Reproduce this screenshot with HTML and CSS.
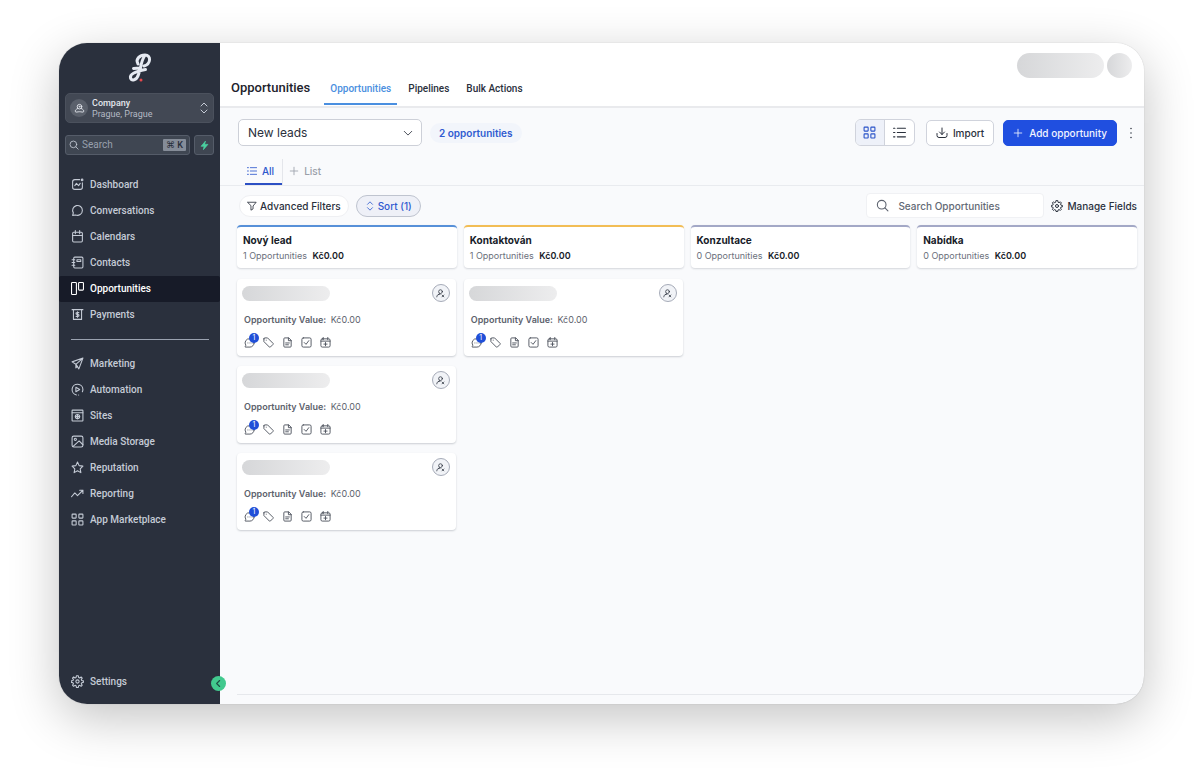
FILE: index.html
```html
<!DOCTYPE html>
<html lang="en">
<head>
<meta charset="utf-8">
<title>Opportunities</title>
<link rel="stylesheet" href="styles.css">
</head>
<body>
<svg class="sprite" aria-hidden="true">
  <symbol id="dashboard" viewBox="0 0 24 24"><path d="M16 3H7a4 4 0 0 0-4 4v10a4 4 0 0 0 4 4h10a4 4 0 0 0 4-4V9M7 14l3-4 4 4 3-4"/><circle cx="20.500" cy="3.500" r="1.500"/></symbol>
  <symbol id="chat" viewBox="0 0 24 24"><path d="M21 12a9 9 0 0 1-12.600 8.200L3 21l1.300-4.600A9 9 0 1 1 21 12z"/></symbol>
  <symbol id="calendar" viewBox="0 0 24 24"><rect x="3" y="4" width="18" height="18" rx="2"/><path d="M3 10h18M8 1v6M16 1v6"/></symbol>
  <symbol id="contacts" viewBox="0 0 24 24"><rect x="5" y="2" width="17" height="20" rx="2"/><path d="M2 7h5M2 12h5M2 17h5M11 7h7v3h-7z"/></symbol>
  <symbol id="board" viewBox="0 0 24 24"><rect x="1" y="1" width="9" height="22" rx="1.500"/><rect x="14" y="1" width="9" height="14" rx="1.500"/></symbol>
  <symbol id="payments" viewBox="0 0 24 24"><path d="M2 3h20M4.500 3v18h15V3M14.500 8.500h-3.500a1.700 1.700 0 0 0 0 3.500h2a1.700 1.700 0 0 1 0 3.500H9.500M12 7v10"/></symbol>
  <symbol id="send" viewBox="0 0 24 24"><path d="M22 2 2 9l7 4.500L14.500 22zM22 2 9 13.500M9 13.500V20l3-3"/></symbol>
  <symbol id="automation" viewBox="0 0 24 24"><path d="M10 22A10 10 0 1 1 22 12q0 2-1 4M9 8l7 4-7 4zM14 22h.1"/></symbol>
  <symbol id="sites" viewBox="0 0 24 24"><rect x="2" y="2" width="20" height="20" rx="1"/><path d="M2 7h20"/><circle cx="12" cy="14" r="4"/><path d="M8 14h8M12 10v8"/></symbol>
  <symbol id="image" viewBox="0 0 24 24"><rect x="2" y="2" width="20" height="20" rx="3"/><circle cx="8" cy="8" r="2"/><path d="m4 21 11-10 7 7"/></symbol>
  <symbol id="star" viewBox="0 0 24 24"><path d="m12 2 3 6.500 7 1-5 5 1.200 7L12 18l-6.200 3.500 1.200-7-5-5 7-1z"/></symbol>
  <symbol id="trend" viewBox="0 0 24 24"><path d="m1 18 6-7 5 5L22 6M16 6h6v6"/></symbol>
  <symbol id="grid" viewBox="0 0 24 24"><rect x="2" y="2" width="7.500" height="7.500" rx="1"/><rect x="14.500" y="2" width="7.500" height="7.500" rx="1"/><rect x="2" y="14.500" width="7.500" height="7.500" rx="1"/><rect x="14.500" y="14.500" width="7.500" height="7.500" rx="1"/></symbol>
  <symbol id="gear" viewBox="0 0 24 24"><circle cx="12" cy="12" r="3"/><path d="m10 1.500-.6 3-2 .9-2.600-1.700-2 2L4.500 8.300l-.9 2-3 .6v2.700l3 .6.9 2-1.700 2.600 2 2 2.600-1.700 2 .9.600 3h3.500l.6-3 2-.9 2.600 1.700 2-2-1.700-2.600.9-2 3-.6v-2.700l-3-.6-.9-2 1.700-2.600-2-2-2.600 1.700-2-.9-.6-3z"/></symbol>
  <symbol id="search" viewBox="0 0 24 24"><circle cx="10.500" cy="10.500" r="8"/><path d="m16.500 16.500 5.500 5.500"/></symbol>
  <symbol id="user" viewBox="0 0 24 24"><circle cx="12" cy="8" r="5"/><circle cx="12" cy="8" r="1"/><path d="M8 12c-4 2-6 4-5 7 1 2 5 0 9 0s8 2 9 0c1-3-1-5-5-7"/></symbol>
  <symbol id="updown" viewBox="0 0 24 24"><path d="m6 8 6-6 6 6M6 16l6 6 6-6"/></symbol>
  <symbol id="bolt" viewBox="0 0 24 24"><path d="M14 1 3 14h8l-2 9 12-14h-8z"/></symbol>
  <symbol id="left" viewBox="0 0 24 24"><path d="m15 4-8 8 8 8"/></symbol>
  <symbol id="down" viewBox="0 0 24 24"><path d="m3 8 9 9 9-9"/></symbol>
  <symbol id="list" viewBox="0 0 24 24"><path d="M8 4h15M8 12h15M8 20h15M1 4h2.500M1 12h2.500M1 20h2.500"/></symbol>
  <symbol id="plus" viewBox="0 0 24 24"><path d="M12 3v18M3 12h18"/></symbol>
  <symbol id="import" viewBox="0 0 24 24"><path d="M12 2v13M7 10l5 5 5-5M2 13v4a4 4 0 0 0 4 4h12a4 4 0 0 0 4-4v-4"/></symbol>
  <symbol id="dots" viewBox="0 0 24 24"><circle cx="12" cy="3" r="1.500"/><circle cx="12" cy="12" r="1.500"/><circle cx="12" cy="21" r="1.500"/></symbol>
  <symbol id="filter" viewBox="0 0 24 24"><path d="M2 3h20l-7.500 9v7l-5 3V12z"/></symbol>
  <symbol id="unassigned" viewBox="0 0 24 24"><circle cx="12" cy="7" r="5"/><path d="M2 21c0-5 4-7 9-7M9 12l-3 3M16 16l5 5M21 16l-5 5"/></symbol>
  <symbol id="message" viewBox="0 0 24 24"><path d="M22 13a9 9 0 0 1-9 9H3q-1 0-.5-1L4 18a9 9 0 0 1 9-14 9 9 0 0 1 9 9zM8.500 13h.1M13 13h.1M17.500 13h.1"/></symbol>
  <symbol id="tag" viewBox="0 0 24 24"><path d="M2 4v6l12 12q1 1 2 0l6-6q1-1 0-2L10 2H4a2 2 0 0 0-2 2zM7 7h.1"/></symbol>
  <symbol id="note" viewBox="0 0 24 24"><path d="M14 2H6a2 2 0 0 0-2 2v16a2 2 0 0 0 2 2h12a2 2 0 0 0 2-2V8zM14 2v6h6M8 13h8M8 17h6"/></symbol>
  <symbol id="check" viewBox="0 0 24 24"><rect x="2" y="2" width="20" height="20" rx="3"/><path d="m7 12 4 4 6-8"/></symbol>
  <symbol id="calplus" viewBox="0 0 24 24"><rect x="2" y="4" width="20" height="18" rx="3"/><path d="M7 1v5M17 1v5M2 9h20M12 12v7M8.500 15.500h7"/></symbol>
</svg>

<div class="app">
  <aside class="sidebar">
    <svg class="logo" viewBox="0 0 24 30" role="img" aria-label="Company logo">
      <path class="logo-stroke" d="M10 11C7 6 12 2 17 2c6.500 0 6 9-1 11M16.500 3C13 8 13 15 10.500 21.500 8.500 28 3.500 28 2.500 25c-1-4 5-6.500 15-8.500M5.500 15.500l7-.5"/>
      <circle class="logo-dot" cx="13" cy="27" r="1.500"/>
    </svg>
    <button class="company" type="button">
      <span class="company-pic"><svg class="i"><use href="#user"/></svg></span>
      <span class="company-text"><span class="company-name">Company</span><span>Prague, Prague</span></span>
      <svg class="i"><use href="#updown"/></svg>
    </button>
    <div class="side-search">
      <label class="side-field"><svg class="i"><use href="#search"/></svg><input type="text" placeholder="Search" aria-label="Search"><kbd>⌘ K</kbd></label>
      <button class="quick" type="button" aria-label="Quick actions"><svg class="i"><use href="#bolt"/></svg></button>
    </div>
    <nav class="nav">
      <a href="#"><svg class="i"><use href="#dashboard"/></svg>Dashboard</a>
      <a href="#"><svg class="i"><use href="#chat"/></svg>Conversations</a>
      <a href="#"><svg class="i"><use href="#calendar"/></svg>Calendars</a>
      <a href="#"><svg class="i"><use href="#contacts"/></svg>Contacts</a>
      <a class="current" href="#" aria-current="page"><svg class="i"><use href="#board"/></svg>Opportunities</a>
      <a href="#"><svg class="i"><use href="#payments"/></svg>Payments</a>
      <hr>
      <a href="#"><svg class="i"><use href="#send"/></svg>Marketing</a>
      <a href="#"><svg class="i"><use href="#automation"/></svg>Automation</a>
      <a href="#"><svg class="i"><use href="#sites"/></svg>Sites</a>
      <a href="#"><svg class="i"><use href="#image"/></svg>Media Storage</a>
      <a href="#"><svg class="i"><use href="#star"/></svg>Reputation</a>
      <a href="#"><svg class="i"><use href="#trend"/></svg>Reporting</a>
      <a href="#"><svg class="i"><use href="#grid"/></svg>App Marketplace</a>
      <a class="settings" href="#"><svg class="i"><use href="#gear"/></svg>Settings</a>
    </nav>
    <button class="collapse" type="button" aria-label="Collapse sidebar"><svg class="i"><use href="#left"/></svg></button>
  </aside>

  <main class="main">
    <header class="top">
      <h1>Opportunities</h1>
      <nav class="tabs">
        <a class="current" href="#">Opportunities</a>
        <a href="#">Pipelines</a>
        <a href="#">Bulk Actions</a>
      </nav>
      <div class="account"><span class="ghost ghost-name"></span><span class="ghost ghost-pic"></span></div>
    </header>

    <section class="toolbar">
      <div class="pipeline"><select aria-label="Pipeline"><option>New leads</option></select><svg class="i"><use href="#down"/></svg></div>
      <span class="count">2 opportunities</span>
      <div class="actions">
        <div class="views">
          <button class="on" type="button" aria-label="Board view"><svg class="i"><use href="#grid"/></svg></button>
          <button type="button" aria-label="List view"><svg class="i"><use href="#list"/></svg></button>
        </div>
        <button class="btn" type="button"><svg class="i"><use href="#import"/></svg>Import</button>
        <button class="btn primary" type="button"><svg class="i"><use href="#plus"/></svg>Add opportunity</button>
        <button class="more" type="button" aria-label="More"><svg class="i"><use href="#dots"/></svg></button>
      </div>
    </section>

    <nav class="lists">
      <a class="current" href="#"><svg class="i"><use href="#list"/></svg>All</a>
      <a href="#"><svg class="i"><use href="#plus"/></svg>List</a>
    </nav>

    <section class="filters">
      <button class="chip" type="button"><svg class="i"><use href="#filter"/></svg>Advanced Filters</button>
      <button class="chip on" type="button"><svg class="i"><use href="#updown"/></svg>Sort (1)</button>
      <label class="find"><svg class="i"><use href="#search"/></svg><input type="text" placeholder="Search Opportunities" aria-label="Search Opportunities"></label>
      <button class="fields" type="button"><svg class="i"><use href="#gear"/></svg>Manage Fields</button>
    </section>

    <section class="board">
      <div class="column">
        <header class="stage blue"><h2>Nový lead</h2><p>1 Opportunities <strong>Kč0.00</strong></p></header>
        <article class="card">
          <div class="card-top"><span class="ghost ghost-title"></span><button class="owner" type="button" aria-label="Assign owner"><svg class="i"><use href="#unassigned"/></svg></button></div>
          <p class="value"><b>Opportunity Value:</b> Kč0.00</p>
          <div class="card-icons"><span class="msg"><svg class="i"><use href="#message"/></svg><span class="badge">1</span></span><svg class="i"><use href="#tag"/></svg><svg class="i"><use href="#note"/></svg><svg class="i"><use href="#check"/></svg><svg class="i"><use href="#calplus"/></svg></div>
        </article>
        <article class="card">
          <div class="card-top"><span class="ghost ghost-title"></span><button class="owner" type="button" aria-label="Assign owner"><svg class="i"><use href="#unassigned"/></svg></button></div>
          <p class="value"><b>Opportunity Value:</b> Kč0.00</p>
          <div class="card-icons"><span class="msg"><svg class="i"><use href="#message"/></svg><span class="badge">1</span></span><svg class="i"><use href="#tag"/></svg><svg class="i"><use href="#note"/></svg><svg class="i"><use href="#check"/></svg><svg class="i"><use href="#calplus"/></svg></div>
        </article>
        <article class="card">
          <div class="card-top"><span class="ghost ghost-title"></span><button class="owner" type="button" aria-label="Assign owner"><svg class="i"><use href="#unassigned"/></svg></button></div>
          <p class="value"><b>Opportunity Value:</b> Kč0.00</p>
          <div class="card-icons"><span class="msg"><svg class="i"><use href="#message"/></svg><span class="badge">1</span></span><svg class="i"><use href="#tag"/></svg><svg class="i"><use href="#note"/></svg><svg class="i"><use href="#check"/></svg><svg class="i"><use href="#calplus"/></svg></div>
        </article>
      </div>
      <div class="column">
        <header class="stage amber"><h2>Kontaktován</h2><p>1 Opportunities <strong>Kč0.00</strong></p></header>
        <article class="card">
          <div class="card-top"><span class="ghost ghost-title"></span><button class="owner" type="button" aria-label="Assign owner"><svg class="i"><use href="#unassigned"/></svg></button></div>
          <p class="value"><b>Opportunity Value:</b> Kč0.00</p>
          <div class="card-icons"><span class="msg"><svg class="i"><use href="#message"/></svg><span class="badge">1</span></span><svg class="i"><use href="#tag"/></svg><svg class="i"><use href="#note"/></svg><svg class="i"><use href="#check"/></svg><svg class="i"><use href="#calplus"/></svg></div>
        </article>
      </div>
      <div class="column">
        <header class="stage"><h2>Konzultace</h2><p>0 Opportunities <strong>Kč0.00</strong></p></header>
      </div>
      <div class="column">
        <header class="stage"><h2>Nabídka</h2><p>0 Opportunities <strong>Kč0.00</strong></p></header>
      </div>
    </section>
  </main>
</div>
</body>
</html>
```

FILE: styles.css
```css
* { box-sizing: border-box; }

body {
  margin: 0;
  min-height: 100vh;
  padding: 43px 56px 72px 59px;
  display: flex;
  background: #fff;
  color: #2a303c;
  font-family: Inter, "Liberation Sans", sans-serif;
  font-size: 10px;
  line-height: 14px;
}

h1, h2, p { margin: 0; }
a { color: inherit; text-decoration: none; }
button, input, select { font: inherit; color: inherit; margin: 0; padding: 0; border: 0; background: none; }
input { min-width: 0; outline: 0; }

.sprite { position: absolute; width: 0; height: 0; }
.i {
  width: 12px;
  height: 12px;
  flex: none;
  fill: none;
  stroke: currentColor;
  stroke-width: 2;
  stroke-linecap: round;
  stroke-linejoin: round;
}

.app {
  flex: 1;
  display: flex;
  border-radius: 28px;
  background: #f9fafc;
  box-shadow: 0 0 1px rgba(0, 0, 0, .3), 0 14px 50px rgba(0, 0, 0, .24);
}

/* Sidebar */
.sidebar {
  position: relative;
  width: 161px;
  flex: none;
  display: flex;
  flex-direction: column;
  padding: 10px 0 9px;
  border-radius: 28px 0 0 28px;
  background: #2a303d;
  color: #c5cbd6;
  font-family: Roboto, "Liberation Sans", sans-serif;
}
.logo { width: 24px; height: 30px; align-self: center; overflow: visible; }
.logo-stroke { fill: none; stroke: #e6eaf2; stroke-width: 3; stroke-linecap: round; stroke-linejoin: round; }
.logo-dot { fill: #e5484d; }

.company {
  display: flex;
  align-items: center;
  gap: 4px;
  height: 30px;
  margin: 10px 6px 12px;
  padding: 0 3px 0 4px;
  border: 1px solid #4b515d;
  border-radius: 5px;
  background: #424854;
  text-align: left;
}
.company-pic {
  width: 18px;
  height: 18px;
  display: grid;
  place-items: center;
  border-radius: 50%;
  background: #5a606b;
}
.company-pic .i { width: 11px; height: 11px; color: #e3e6ec; }
.company-text { flex: 1; display: flex; flex-direction: column; padding-top: 2px; font-size: 9px; line-height: 11px; color: #b4bac4; }
.company-name { color: #e3e6ec; font-weight: 500; }

.side-search { display: flex; gap: 4px; margin: 0 6px 17px; }
.side-field, .quick { height: 20px; border: 1px solid #555c69; border-radius: 3px; background: #3f4652; }
.side-field { flex: 1; min-width: 0; display: flex; align-items: center; gap: 3px; padding: 0 3px; font-size: 10px; }
.side-field input { flex: 1; width: 0; }
.side-field .i { width: 10px; height: 10px; }
.side-field input::placeholder { color: #98a0ad; opacity: 1; }
kbd { padding: 0 3px; border-radius: 1px; background: #858c98; color: #262c38; font: 500 9px/12px Roboto, "DejaVu Sans", sans-serif; }
.quick { width: 20px; display: grid; place-items: center; }
.quick .i { width: 9px; height: 9px; fill: #4bd0a0; stroke: #4bd0a0; }

.nav { flex: 1; display: flex; flex-direction: column; font-weight: 500; }
.nav a { display: flex; align-items: center; gap: 6px; height: 26px; padding: 0 0 1px 12px; }
.nav .i { width: 13px; height: 13px; }
.nav .current { background: #171b28; color: #fff; border-radius: 2px; }
.nav hr { width: 138px; height: 1px; margin: 11px 0 11px 12px; border: 0; background: #9aa2b0; }
.nav .settings { margin-top: auto; }

.collapse {
  position: absolute;
  right: -6px;
  bottom: 13px;
  width: 15px;
  height: 15px;
  display: grid;
  place-items: center;
  border-radius: 50%;
  background: #42c98e;
  color: #1f4d44;
}
.collapse .i { width: 9px; height: 9px; stroke-width: 3; }

/* Header */
.main { flex: 1; min-width: 0; display: flex; flex-direction: column; }
.top {
  display: flex;
  align-items: flex-end;
  height: 65px;
  padding: 0 12px 1px 11px;
  border-bottom: 2px solid #e9eaed;
  border-radius: 0 28px 0 0;
  background: #fff;
  font-family: Roboto, "Liberation Sans", sans-serif;
}
h1 { margin-bottom: 8px; font-size: 13px; line-height: 18px; font-weight: 500; color: #1d222c; }
.tabs { display: flex; align-items: flex-end; gap: 5px; margin-left: 14px; font-weight: 500; }
.tabs a { padding: 0 6px 7px; border-bottom: 2px solid transparent; }
.tabs .current { color: #4a8fe0; border-color: #4a8fe0; }
.account { display: flex; gap: 3px; align-self: flex-start; margin: 10px 0 0 auto; }
.ghost { display: block; background: linear-gradient(90deg, #d6d7d9, #ededee); }
.ghost-name { width: 87px; height: 25px; border-radius: 13px; }
.ghost-pic { width: 25px; height: 25px; border-radius: 50%; }

/* Toolbar */
.toolbar { display: flex; align-items: center; gap: 8px; padding: 11px 9px 0 18px; }
.pipeline {
  display: grid;
  grid-template-columns: 1fr 10px;
  align-items: center;
  width: 184px;
  height: 27px;
  padding-right: 8px;
  border: 1px solid #cdd0d8;
  border-radius: 5px;
  background: #fff;
}
.pipeline select { grid-area: 1 / 1 / 2 / 3; height: 24px; padding-left: 9px; appearance: none; font-size: 12px; }
.pipeline .i { grid-area: 1 / 2; width: 10px; height: 10px; pointer-events: none; }
.count { padding: 3px 9px; border-radius: 10px; background: #f2f5fb; color: #2f5bd0; font-weight: 600; }
.actions { display: flex; align-items: center; gap: 9px; margin-left: auto; font-weight: 500; }
.views { display: flex; margin-right: 2px; border: 1px solid #d0d3dc; border-radius: 6px; overflow: hidden; background: #fff; }
.views button { width: 29px; height: 25px; display: grid; place-items: center; }
.views .on { background: #eef1f9; color: #2852c8; border-right: 1px solid #d0d3dc; }
.views .i { width: 13px; height: 13px; }
.btn { display: flex; align-items: center; gap: 5px; height: 26px; padding: 0 9px; border: 1px solid #d0d3dc; border-radius: 5px; background: #fff; }
.primary { gap: 6px; border-color: #204fe0; background: #204fe0; color: #f1f4ff; }
.primary .i { width: 10px; height: 10px; }
.more { width: 10px; margin-left: -1px; display: grid; place-items: center; }
.more .i { fill: currentColor; stroke: none; }

/* Saved lists */
.lists { display: flex; height: 40px; padding: 13px 0 0 25px; border-bottom: 1px solid #e9ebef; font-weight: 500; color: #9a9fa9; }
.lists a { display: flex; align-items: center; gap: 5px; padding: 0 7px 1px; border-bottom: 2px solid transparent; }
.lists .i { width: 10px; height: 10px; }
.lists .current { padding: 0 8px 1px 2px; color: #2c57cc; border-color: #2c50c4; box-shadow: 1px 0 #e4e6eb; }

/* Filters */
.filters { display: flex; align-items: center; gap: 7px; padding: 7px 7px 0 19px; font-weight: 500; }
.chip { display: flex; align-items: center; gap: 3px; height: 22px; padding: 0 7px; border: 1px solid #eff0f3; border-radius: 11px; background: #fff; }
.chip .i { width: 10px; height: 10px; }
.chip.on { padding: 0 8px; border-color: #bfc4cf; background: #eef0f7; color: #2f5bd0; }
.find { display: flex; align-items: center; gap: 9px; width: 178px; height: 25px; margin-left: auto; padding: 0 9px; border: 1px solid #f0f1f4; border-radius: 4px; background: #fff; }
.find .i { width: 13px; height: 13px; color: #5d636f; }
.find input { flex: 1; }
.find input::placeholder { color: #636975; opacity: 1; }
.fields { display: flex; align-items: center; gap: 4px; }

/* Board */
.board {
  flex: 1;
  display: grid;
  grid-template-columns: repeat(4, minmax(0, 1fr));
  gap: 7px;
  margin: 7px 7px 9px 17px;
  border-bottom: 1px solid #e6e8ec;
}
.column { display: flex; flex-direction: column; gap: 10px; }
.stage {
  height: 43px;
  margin-bottom: 1px;
  padding: 6px 6px 0;
  border-top: 2px solid #a3a8c6;
  border-radius: 4px;
  background: #fff;
  box-shadow: 0 1px 2px rgba(20, 30, 50, .16);
}
.stage.blue { border-color: #5790d8; }
.stage.amber { border-color: #f2bd55; }
.stage h2 { font-size: 10px; line-height: 14px; font-weight: 700; color: #171b28; }
.stage p { margin-top: 2px; font-size: 9px; color: #6b707b; }
.stage strong { margin-left: 3px; font-weight: 600; color: #171b28; }
.card { height: 77px; margin-right: 1px; padding: 5px 6px 0 5px; border-radius: 4px; background: #fff; box-shadow: 0 1px 2px rgba(20, 30, 50, .2); }
.card-top { display: flex; align-items: center; justify-content: space-between; }
.ghost-title { width: 88px; height: 15px; border-radius: 8px; }
.owner { width: 18px; height: 18px; display: grid; place-items: center; border: 1px solid #a6abb8; border-radius: 50%; background: #f1f3f7; }
.owner .i { width: 9px; height: 9px; }
.value { margin: 11px 2px 0; font-size: 9px; color: #5d626d; }
.value b { margin-right: 2px; font-weight: 600; }
.card-icons { display: flex; gap: 8px; margin: 10px 2px 0; color: #4c515c; }
.card-icons .i { width: 11px; height: 11px; display: block; }
.msg { position: relative; }
.badge {
  position: absolute;
  top: -4px;
  right: -4px;
  width: 10px;
  height: 10px;
  border-radius: 50%;
  background: #204fd8;
  color: #fff;
  font-size: 7px;
  line-height: 10px;
  text-align: center;
}
```
